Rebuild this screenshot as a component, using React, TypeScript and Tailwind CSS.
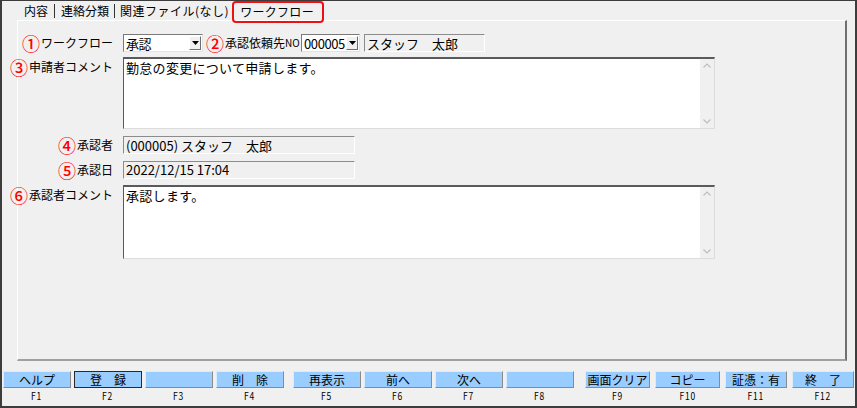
import type { ReactNode } from "react";

const FONT = '"Noto Sans CJK JP", "Noto Sans", sans-serif';

function Num({ n }: { n: string }) {
  return (
    <span className="mr-[1px] text-[18px] font-medium leading-none text-[#ff0000]">{n}</span>
  );
}

function Label({ n, text, top }: { n: string; text: string; top?: boolean }) {
  return (
    <div
      className={`flex w-[95px] shrink-0 justify-end whitespace-nowrap text-[12px] leading-none ${
        top ? "items-start pt-[1px]" : "items-center"
      }`}
    >
      <Num n={n} />
      <span className={top ? "pt-[3px]" : ""}>{text}</span>
    </div>
  );
}

function DropButton() {
  return (
    <div className="flex h-full w-[12px] shrink-0 items-center justify-center border-t border-l border-t-white border-l-white border-r border-b border-r-[#6e6e6e] border-b-[#6e6e6e] bg-[#f0f0f0]">
      <svg width="7" height="4" viewBox="0 0 7 4">
        <path d="M0 0h7L3.5 4z" fill="#000" />
      </svg>
    </div>
  );
}

function Combo({ value, width }: { value: string; width: string }) {
  return (
    <div
      className={`flex h-[18px] ${width} shrink-0 items-stretch border-t border-l border-t-[#7a7a7a] border-l-[#7a7a7a] border-r border-b border-r-[#e3e3e3] border-b-[#e3e3e3] bg-white p-[1px]`}
    >
      <span className="flex flex-1 items-center whitespace-nowrap pl-[1px] text-[13px] leading-none tracking-[-0.4px]">
        {value}
      </span>
      <DropButton />
    </div>
  );
}

function ReadBox({ children, width }: { children: ReactNode; width: string }) {
  return (
    <div
      className={`flex h-[18px] ${width} shrink-0 items-center border-t border-l border-t-[#8c8c8c] border-l-[#8c8c8c] border-r border-b border-r-white border-b-white bg-[#f0f0f0] pl-[2px] text-[13px] leading-none whitespace-nowrap`}
    >
      {children}
    </div>
  );
}

function Memo({ text, height }: { text: string; height: string }) {
  return (
    <div
      className={`flex ${height} w-[592px] shrink-0 border-t-2 border-l border-t-[#5a5a5a] border-l-[#5a5a5a] border-r border-b border-r-[#dcdcdc] border-b-[#dcdcdc] bg-white`}
    >
      <div className="flex-1 pl-[2px] pt-[1px] text-[13px] leading-[16px] tracking-[0.3px]">{text}</div>
      <div className="flex w-[14px] flex-col items-center justify-between bg-[#f0f0f0] py-[4px]">
        <svg width="8" height="5" viewBox="0 0 8 5">
          <path d="M0.5 4.5L4 1l3.5 3.5" fill="none" stroke="#bdbdbd" strokeWidth="1.2" />
        </svg>
        <svg width="8" height="5" viewBox="0 0 8 5">
          <path d="M0.5 0.5L4 4l3.5-3.5" fill="none" stroke="#bdbdbd" strokeWidth="1.2" />
        </svg>
      </div>
    </div>
  );
}

const keys = [
  [
    { label: "ヘルプ", key: "F1", w: "w-[68px]" },
    { label: "登　録", key: "F2", w: "w-[68px]", focus: true },
    { label: "", key: "F3", w: "w-[68px]" },
    { label: "削　除", key: "F4", w: "w-[68px]" },
  ],
  [
    { label: "再表示", key: "F5", w: "w-[68px]" },
    { label: "前へ", key: "F6", w: "w-[68px]" },
    { label: "次へ", key: "F7", w: "w-[68px]" },
    { label: "", key: "F8", w: "w-[68px]" },
  ],
  [
    { label: "画面クリア", key: "F9", w: "w-[65px]" },
    { label: "コピー", key: "F10", w: "w-[65px]" },
    { label: "証憑：有", key: "F11", w: "w-[62px]" },
    { label: "終　了", key: "F12", w: "w-[62px]" },
  ],
];

function FKey({ label, k, w, focus }: { label: string; k: string; w: string; focus?: boolean }) {
  return (
    <div className={`flex ${w} shrink-0 flex-col items-center`}>
      <div
        className={`flex h-[17px] w-full items-center justify-center bg-[#99ccff] text-[12px] leading-none ${
          focus
            ? "border border-[#2a2a2a]"
            : "border-t border-l border-t-[#d8ecff] border-l-[#d8ecff] border-r border-b border-r-[#8a8a8a] border-b-[#8a8a8a]"
        }`}
      >
        {label}
      </div>
      <div className="mt-[2px] text-[10px] leading-[12px] tracking-[1px] scale-x-[0.85]">{k}</div>
    </div>
  );
}

export default function App() {
  return (
    <div
      className="flex h-[408px] w-[857px] flex-col overflow-hidden border-t border-l-2 border-r-2 border-b-2 border-[#3c3c3c] bg-[#f0f0f0] text-black"
      style={{ fontFamily: FONT }}
    >
      {/* tabs */}
      <div className="flex h-[19px] shrink-0 items-center pl-[22px] text-[12px] leading-none">
        <span>内容</span>
        <span className="mx-[6px] h-[14px] w-px bg-[#333]" />
        <span>連絡分類</span>
        <span className="mx-[5px] h-[14px] w-px bg-[#333]" />
        <span className="tracking-[0.5px]">関連ファイル(なし)</span>
        <span className="relative z-10 ml-[3px] flex h-[22px] items-center self-start rounded-[4px] border-2 border-[#ee1111] pl-[6px] pr-[8px] tracking-[0.3px]">
          ワークフロー
        </span>
      </div>

      {/* panel */}
      <div className="ml-[15px] flex h-[341px] w-[830px] shrink-0 flex-col border-t border-l border-t-white border-l-white border-r-2 border-b-2 border-r-[#707070] border-b-[#a0a0a0] pt-[13px]">
        <div className="flex h-[18px] items-center gap-[10px]">
          <Label n="①" text="ワークフロー" />
          <div className="flex items-center">
            <Combo value="承認" width="w-[80px]" />
            <div className="ml-[3px] flex w-[95px] items-center whitespace-nowrap text-[12px] leading-none">
              <Num n="②" />
              <span>承認依頼先</span>
              <span className="text-[10px]">NO</span>
            </div>
            <Combo value="000005" width="w-[59px]" />
            <div className="ml-[4px]">
              <ReadBox width="w-[121px]">スタッフ　太郎</ReadBox>
            </div>
          </div>
        </div>

        <div className="mt-[5px] flex gap-[10px]">
          <Label n="③" text="申請者コメント" top />
          <Memo text="勤怠の変更について申請します。" height="h-[72px]" />
        </div>

        <div className="mt-[7px] flex h-[18px] items-center gap-[10px]">
          <Label n="④" text="承認者" />
          <ReadBox width="w-[232px]">(000005) スタッフ　太郎</ReadBox>
        </div>

        <div className="mt-[6px] flex h-[19px] items-center gap-[10px]">
          <Label n="⑤" text="承認日" />
          <ReadBox width="w-[232px]">2022/12/15 17:04</ReadBox>
        </div>

        <div className="mt-[6px] flex gap-[10px]">
          <Label n="⑥" text="承認者コメント" top />
          <Memo text="承認します。" height="h-[74px]" />
        </div>
      </div>

      {/* function keys */}
      <div className="mt-[10px] flex pl-[1px]">
        {keys.map((group, gi) => (
          <div
            key={gi}
            className={`flex ${gi === 2 ? "gap-[5px]" : "gap-[3px]"} ${gi === 1 ? "ml-[9px]" : ""} ${gi === 2 ? "ml-[11px]" : ""}`}
          >
            {group.map((b) => (
              <FKey key={b.key} label={b.label} k={b.key} w={b.w} focus={b.focus} />
            ))}
          </div>
        ))}
      </div>
    </div>
  );
}
